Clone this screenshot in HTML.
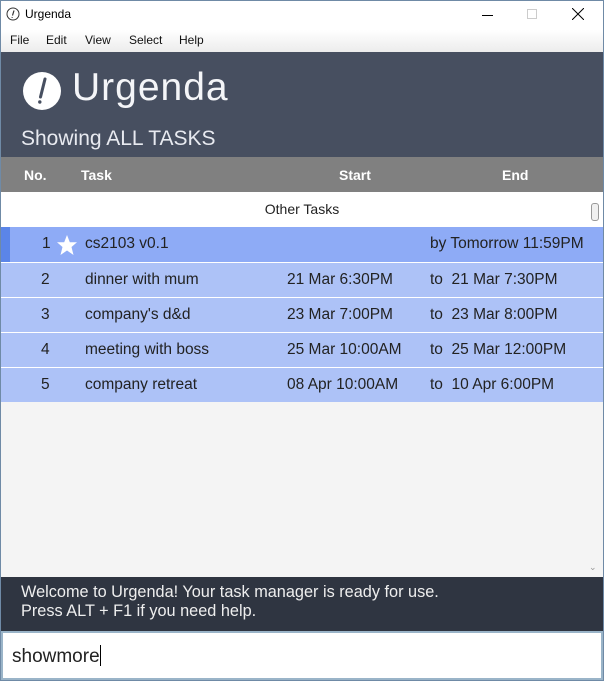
<!DOCTYPE html>
<html><head><meta charset="utf-8"><style>
*{margin:0;padding:0;box-sizing:border-box}
body{width:604px;height:681px;overflow:hidden;font-family:"Liberation Sans",sans-serif;background:#fff;position:relative}
.abs{position:absolute}
#win{position:absolute;left:0;top:0;width:604px;height:681px;border:1px solid #6f8aa6}
.title{top:0;left:0;width:604px;height:30px;background:#fff;font-size:12px;color:#000}
.menu{top:30px;left:1px;width:602px;height:22px;background:linear-gradient(#fff,#ececec);font-size:12px;color:#111}
.menu span{position:absolute;top:3px}
.hdr{top:52px;left:1px;width:602px;height:105px;background:#474f60;color:#fff}
.cols{top:157px;left:1px;width:602px;height:35px;background:#808080;color:#fff;font-weight:bold;font-size:14px}
.cols span{position:absolute;top:10px}
.other{top:192px;left:1px;width:602px;height:35px;background:#fff;font-size:14px;color:#222;text-align:center;line-height:35px}
.row{left:1px;width:602px;height:34px;background:#adc2f7;font-size:15.5px;color:#222}
.row span{position:absolute;top:8px}
.empty{top:402px;left:1px;width:602px;height:175px;background:#f4f4f4}
.status{top:577px;left:1px;width:602px;height:54px;background:#2f3541;color:#eee;font-size:16.3px;line-height:19px;padding:6px 0 0 20px}
.input{top:631px;left:1px;width:602px;height:49px;background:#fff;border:2px solid #9ab4c8;font-size:19px;color:#222;padding:12px 0 0 9px}
</style></head><body>
<div class="abs title">
 <svg class="abs" style="left:6px;top:7px" width="14" height="14"><circle cx="7" cy="7" r="6" fill="none" stroke="#333" stroke-width="1"/><path d="M8 3.5 L6.5 8.5 M6.2 10 L6 10.8" stroke="#333" stroke-width="1.2"/></svg>
 <span class="abs" style="left:25px;top:7px">Urgenda</span>
 <div class="abs" style="left:482px;top:15px;width:11px;height:1px;background:#000"></div>
 <div class="abs" style="left:527px;top:9px;width:10px;height:10px;border:1px solid #ccc"></div>
 <svg class="abs" style="left:572px;top:8px" width="12" height="12"><path d="M0 0L12 12M12 0L0 12" stroke="#000" stroke-width="1"/></svg>
</div>
<div class="abs menu"><span style="left:9px">File</span><span style="left:45px">Edit</span><span style="left:84px">View</span><span style="left:128px">Select</span><span style="left:178px">Help</span></div>
<div class="abs hdr">
 <svg class="abs" style="left:21px;top:19px" width="40" height="40"><circle cx="20" cy="20" r="19" fill="#fff"/><path d="M23 8 L18.5 26" stroke="#474f60" stroke-width="3" stroke-linecap="round"/><circle cx="17.8" cy="31" r="1.7" fill="#474f60"/></svg>
 <div class="abs" style="left:71px;top:14px;font-size:39px;letter-spacing:1px;color:#f4f5f8">Urgenda</div>
 <div class="abs" style="left:20px;top:75px;font-size:21px;color:#e8eaf0">Showing ALL TASKS</div>
</div>
<div class="abs cols"><span style="left:23px">No.</span><span style="left:80px">Task</span><span style="left:338px">Start</span><span style="left:501px">End</span></div>
<div class="abs other">Other Tasks</div>
<div class="abs" style="left:589px;top:192px;width:14px;height:35px;background:#fff"></div>
<div class="abs" style="left:591px;top:203px;width:8px;height:18px;border:1px solid #999;border-radius:3px;background:#f0f0f0"></div>
<div class="abs row" style="top:227px;height:35px;background:#8eabf6">
 <div class="abs" style="left:0;top:0;width:9px;height:35px;background:#5b85e8"></div>
 <span style="left:41px">1</span>
 <svg class="abs" style="left:55px;top:7px" width="22" height="22"><path d="M11 1 L13.8 8.3 L21 8.3 L15.5 13 L17.5 21 L11 16.5 L4.5 21 L6.5 13 L1 8.3 L8.2 8.3Z" fill="#fff"/></svg>
 <span style="left:84px">cs2103 v0.1</span><span style="left:429px">by Tomorrow 11:59PM</span>
</div>
<div class="abs row" style="top:263px"><span style="left:40px">2</span><span style="left:84px">dinner with mum</span><span style="left:286px">21 Mar 6:30PM</span><span style="left:429px">to&nbsp; 21 Mar 7:30PM</span></div>
<div class="abs row" style="top:298px"><span style="left:40px">3</span><span style="left:84px">company's d&amp;d</span><span style="left:286px">23 Mar 7:00PM</span><span style="left:429px">to&nbsp; 23 Mar 8:00PM</span></div>
<div class="abs row" style="top:333px"><span style="left:40px">4</span><span style="left:84px">meeting with boss</span><span style="left:286px">25 Mar 10:00AM</span><span style="left:429px">to&nbsp; 25 Mar 12:00PM</span></div>
<div class="abs row" style="top:368px"><span style="left:40px">5</span><span style="left:84px">company retreat</span><span style="left:286px">08 Apr 10:00AM</span><span style="left:429px">to&nbsp; 10 Apr 6:00PM</span></div>
<div class="abs empty"></div>
<div class="abs" style="left:589px;top:562px;font-size:9px;color:#999">&#8964;</div>
<div class="abs status">Welcome to Urgenda! Your task manager is ready for use.<br>Press ALT + F1 if you need help.</div>
<div class="abs input">showmore<span style="display:inline-block;width:1px;height:21px;background:#000;vertical-align:-4px"></span></div>
<div id="win"></div>
</body></html>
